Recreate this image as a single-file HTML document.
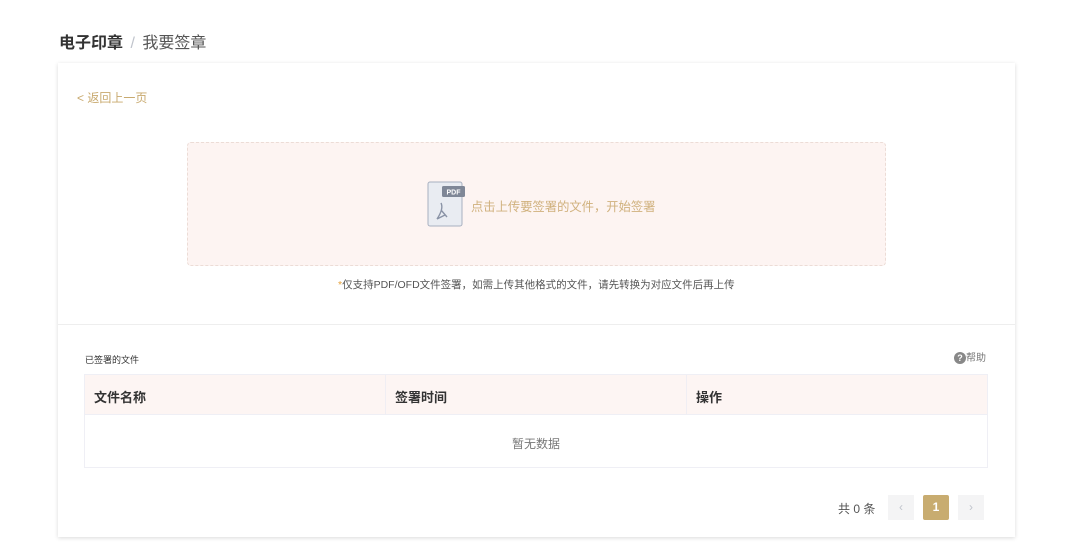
<!DOCTYPE html>
<html><head><meta charset="utf-8"><style>
*{box-sizing:border-box;margin:0;padding:0}
body{width:1080px;height:553px;background:#fff;font-family:"Liberation Sans","Noto Sans CJK SC",sans-serif;position:relative;overflow:hidden}
.a{position:absolute}
</style></head><body>
<div class="a" style="left:59px;top:29px;font-size:16px;color:#333;font-weight:bold">电子印章 <span style="color:#c0c4cc;font-weight:normal;margin:0 3px">/</span> <span style="font-weight:normal;color:#555">我要签章</span></div>
<div class="a" style="left:58px;top:63px;width:957px;height:474px;background:#fff;box-shadow:0 1px 4px rgba(0,0,0,0.15)"></div>
<div class="a" style="left:77px;top:89px;font-size:12px;color:#c8a96e">&lt; 返回上一页</div>
<div class="a" style="left:187px;top:142px;width:699px;height:124px;background:#fdf4f2;border:1px dashed #ecdcd6;border-radius:4px"></div>
<svg class="a" style="left:427px;top:181px" width="40" height="46" viewBox="0 0 40 46">
<rect x="1" y="1" width="34" height="44" rx="2" fill="#e9ecf2" stroke="#a8b0c0"/>
<rect x="15" y="5" width="23" height="11" rx="1.5" fill="#7f8797"/>
<text x="26.5" y="13.5" font-size="7" fill="#fff" text-anchor="middle" font-family="Liberation Sans" font-weight="bold">PDF</text>
<path d="M10 38 C14 32 16 26 14 22 M14 29 L20 36 M10 38 L18 34" stroke="#8a93a6" stroke-width="1.4" fill="none"/>
</svg>
<div class="a" style="left:471px;top:197px;font-size:12.3px;color:#d0b17d">点击上传要签署的文件，开始签署</div>
<div class="a" style="left:338px;top:277px;font-size:10.5px;color:#555"><span style="color:#e6a23c">*</span>仅支持PDF/OFD文件签署，如需上传其他格式的文件，请先转换为对应文件后再上传</div>
<div class="a" style="left:58px;top:324px;width:957px;height:1px;background:#eee"></div>
<div class="a" style="left:85px;top:353px;font-size:9px;color:#333">已签署的文件</div>
<div class="a" style="left:954px;top:352px;font-size:10px;color:#777;line-height:14px"><span style="display:inline-block;width:12px;height:12px;border-radius:50%;background:#888;color:#fff;font-size:9px;text-align:center;line-height:12px;font-weight:bold;vertical-align:middle">?</span>帮助</div>
<div class="a" style="left:84px;top:374px;width:904px;height:94px;border:1px solid #efeff5"></div>
<div class="a" style="left:85px;top:375px;width:902px;height:40px;background:#fdf5f3;border-bottom:1px solid #efeff5"></div>
<div class="a" style="left:385px;top:375px;width:1px;height:40px;background:#f0eef3"></div>
<div class="a" style="left:686px;top:375px;width:1px;height:40px;background:#f0eef3"></div>
<div class="a" style="left:94px;top:387px;font-size:13px;font-weight:bold;color:#333">文件名称</div>
<div class="a" style="left:395px;top:387px;font-size:13px;font-weight:bold;color:#333">签署时间</div>
<div class="a" style="left:696px;top:387px;font-size:13px;font-weight:bold;color:#333">操作</div>
<div class="a" style="left:512px;top:435px;font-size:12px;color:#777">暂无数据</div>
<div class="a" style="left:838px;top:500px;font-size:12px;color:#555">共 0 条</div>
<div class="a" style="left:888px;top:495px;width:26px;height:25px;background:#f4f4f5;color:#c0c4cc;text-align:center;line-height:25px;font-size:12px">‹</div>
<div class="a" style="left:923px;top:495px;width:26px;height:25px;background:#c8ac70;color:#fff;text-align:center;line-height:25px;font-size:12px;font-weight:bold;border-radius:2px">1</div>
<div class="a" style="left:958px;top:495px;width:26px;height:25px;background:#f4f4f5;color:#c0c4cc;text-align:center;line-height:25px;font-size:12px">›</div>
</body></html>
